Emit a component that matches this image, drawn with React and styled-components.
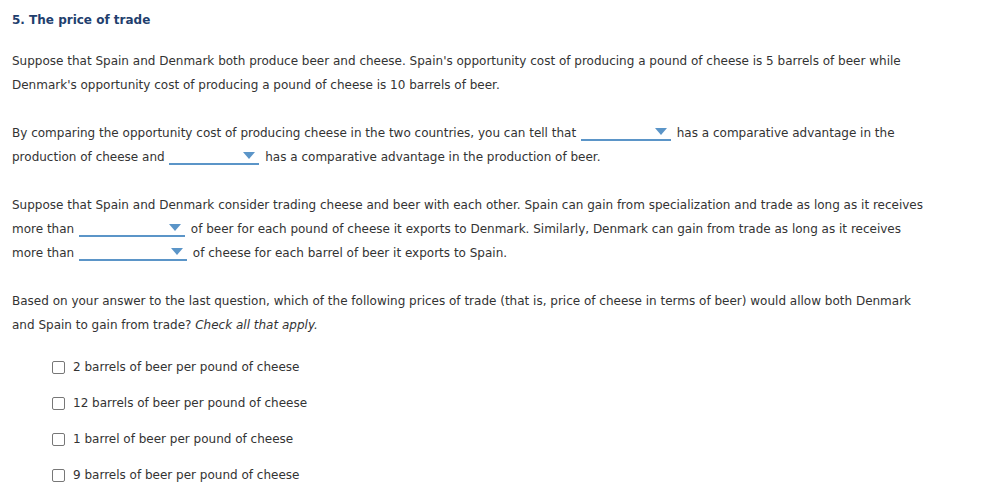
import React from "react";
import styled, { createGlobalStyle } from "styled-components";

const Global = createGlobalStyle`
  html, body { margin: 0; padding: 0; background: #fff; }
  body { font-family: "DejaVu Sans", Verdana, sans-serif; color: #333; }
`;

const Page = styled.div`
  padding: 8px 12px 0 12px;
  width: 1004px;
  box-sizing: border-box;
  font-size: 12px;
  line-height: 24px;
`;

const Title = styled.h2`
  margin: 0 0 17px 0;
  font-size: 12px;
  line-height: 24px;
  font-weight: bold;
  color: #1f3f6e;
`;

const Para = styled.p`
  margin: 0 0 ${(p) => p.$mb ?? 24}px 0;
  width: ${(p) => p.$w ?? 920}px;
`;

const Select = styled.span`
  display: inline-block;
  position: relative;
  width: ${(p) => p.$w}px;
  height: 16px;
  vertical-align: -4px;
  border-bottom: 2px solid #5b95c8;
  margin: 0 ${(p) => p.$mr ?? 2}px 0 ${(p) => p.$ml ?? 1}px;
`;

const Arrow = styled.span`
  position: absolute;
  right: 4px;
  top: 5px;
  width: 0;
  height: 0;
  border-left: 6px solid transparent;
  border-right: 6px solid transparent;
  border-top: 7px solid #5b95c8;
`;

const Dropdown = ({ w, ml, mr }) => (
  <Select $w={w} $ml={ml} $mr={mr}>
    <Arrow />
  </Select>
);

const List = styled.div`
  padding-left: 40px;
  display: flex;
  flex-direction: column;
`;

const Option = styled.label`
  display: flex;
  align-items: center;
  height: 36px;
  gap: 8px;
`;

const Box = styled.span`
  width: 11px;
  height: 11px;
  border: 1px solid #777;
  border-radius: 2px;
  background: #fff;
  flex: none;
`;

const options = [
  "2 barrels of beer per pound of cheese",
  "12 barrels of beer per pound of cheese",
  "1 barrel of beer per pound of cheese",
  "9 barrels of beer per pound of cheese",
];

export default function App() {
  return (
    <>
      <Global />
      <Page>
        <Title>5. The price of trade</Title>
        <Para $w={900}>
          Suppose that Spain and Denmark both produce beer and cheese. Spain's opportunity cost of producing a pound of
          cheese is 5 barrels of beer while Denmark's opportunity cost of producing a pound of cheese is 10 barrels of beer.
        </Para>
        <Para $w={890}>
          By comparing the opportunity cost of producing cheese in the two countries, you can tell that{" "}
          <Dropdown w={90} /> has a comparative advantage in the production of cheese and <Dropdown w={90} /> has a
          comparative advantage in the production of beer.
        </Para>
        <Para $w={915}>
          Suppose that Spain and Denmark consider trading cheese and beer with each other. Spain can gain from
          specialization and trade as long as it receives more than <Dropdown w={106} /> of beer for each pound of
          cheese it exports to Denmark. Similarly, Denmark can gain from trade as long as it receives more than{" "}
          <Dropdown w={108} /> of cheese for each barrel of beer it exports to Spain.
        </Para>
        <Para $w={920} $mb={12}>
          Based on your answer to the last question, which of the following prices of trade (that is, price of cheese
          in terms of beer) would allow both Denmark and Spain to gain from trade? <i>Check all that apply.</i>
        </Para>
        <List>
          {options.map((o) => (
            <Option key={o}>
              <Box />
              {o}
            </Option>
          ))}
        </List>
      </Page>
    </>
  );
}
